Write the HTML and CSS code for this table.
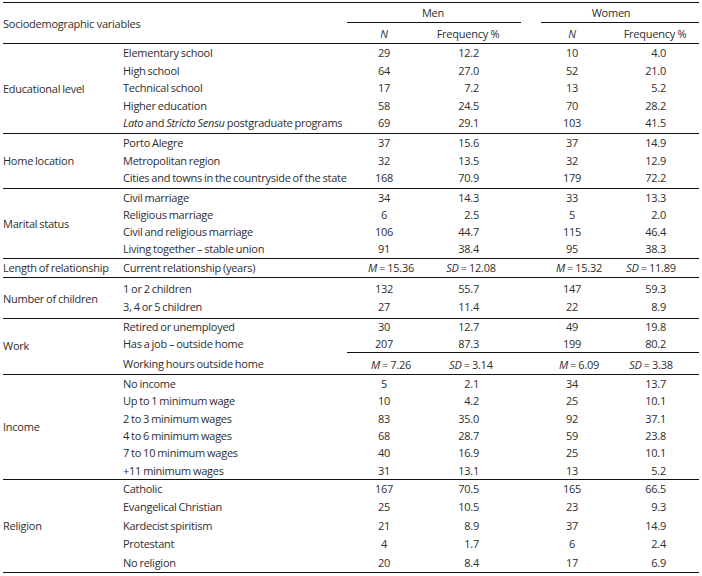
FILE: index.html
```html
<!DOCTYPE html>
<html lang="en">
<head>
<meta charset="utf-8">
<title>Sociodemographic variables</title>
<link rel="stylesheet" href="styles.css">
</head>
<body>
<table class="t">
  <colgroup>
    <col class="c-lab"><col class="c-sub"><col class="c-n"><col class="c-f"><col class="c-gap"><col class="c-n2"><col class="c-f2">
  </colgroup>
  <thead>
    <tr class="h1">
      <th class="lab" rowspan="2">Sociodemographic variables</th>
      <th></th>
      <th class="grp men" colspan="2">Men</th>
      <th></th>
      <th class="grp women" colspan="2">Women</th>
    </tr>
    <tr class="h2">
      <th></th>
      <th class="n"><i>N</i></th>
      <th class="fh">Frequency %</th>
      <th></th>
      <th class="n"><i>N</i></th>
      <th class="fh2">Frequency %</th>
    </tr>
  </thead>
  <tbody class="g edu">
    <tr class="first"><td class="lab" rowspan="5">Educational level</td><td class="sub">Elementary school</td><td class="n">29</td><td class="f">12.2</td><td></td><td class="n">10</td><td class="f2">4.0</td></tr>
    <tr><td class="sub">High school</td><td class="n">64</td><td class="f">27.0</td><td></td><td class="n">52</td><td class="f2">21.0</td></tr>
    <tr><td class="sub">Technical school</td><td class="n">17</td><td class="f">7.2</td><td></td><td class="n">13</td><td class="f2">5.2</td></tr>
    <tr><td class="sub">Higher education</td><td class="n">58</td><td class="f">24.5</td><td></td><td class="n">70</td><td class="f2">28.2</td></tr>
    <tr class="last"><td class="sub"><i>Lato</i> and <i>Stricto Sensu</i> postgraduate programs</td><td class="n">69</td><td class="f">29.1</td><td></td><td class="n">103</td><td class="f2">41.5</td></tr>
  </tbody>
  <tbody class="g home">
    <tr class="first"><td class="lab" rowspan="3">Home location</td><td class="sub">Porto Alegre</td><td class="n">37</td><td class="f">15.6</td><td></td><td class="n">37</td><td class="f2">14.9</td></tr>
    <tr><td class="sub">Metropolitan region</td><td class="n">32</td><td class="f">13.5</td><td></td><td class="n">32</td><td class="f2">12.9</td></tr>
    <tr class="last"><td class="sub">Cities and towns in the countryside of the state</td><td class="n">168</td><td class="f">70.9</td><td></td><td class="n">179</td><td class="f2">72.2</td></tr>
  </tbody>
  <tbody class="g marital">
    <tr class="first"><td class="lab" rowspan="4">Marital status</td><td class="sub">Civil marriage</td><td class="n">34</td><td class="f">14.3</td><td></td><td class="n">33</td><td class="f2">13.3</td></tr>
    <tr><td class="sub">Religious marriage</td><td class="n">6</td><td class="f">2.5</td><td></td><td class="n">5</td><td class="f2">2.0</td></tr>
    <tr><td class="sub">Civil and religious marriage</td><td class="n">106</td><td class="f">44.7</td><td></td><td class="n">115</td><td class="f2">46.4</td></tr>
    <tr class="last"><td class="sub">Living together – stable union</td><td class="n">91</td><td class="f">38.4</td><td></td><td class="n">95</td><td class="f2">38.3</td></tr>
  </tbody>
  <tbody class="g length">
    <tr class="first last"><td class="lab">Length of relationship</td><td class="sub">Current relationship (years)</td><td class="m"><i>M</i> = 15.36</td><td class="sd"><i>SD</i> = 12.08</td><td></td><td class="m"><i>M</i> = 15.32</td><td class="sd"><i>SD</i> = 11.89</td></tr>
  </tbody>
  <tbody class="g children">
    <tr class="first"><td class="lab" rowspan="2">Number of children</td><td class="sub">1 or 2 children</td><td class="n">132</td><td class="f">55.7</td><td></td><td class="n">147</td><td class="f2">59.3</td></tr>
    <tr class="last"><td class="sub">3, 4 or 5 children</td><td class="n">27</td><td class="f">11.4</td><td></td><td class="n">22</td><td class="f2">8.9</td></tr>
  </tbody>
  <tbody class="g work">
    <tr class="first"><td class="lab" rowspan="3">Work</td><td class="sub">Retired or unemployed</td><td class="n">30</td><td class="f">12.7</td><td></td><td class="n">49</td><td class="f2">19.8</td></tr>
    <tr><td class="sub">Has a job – outside home</td><td class="n">207</td><td class="f">87.3</td><td></td><td class="n">199</td><td class="f2">80.2</td></tr>
    <tr class="last sep"><td class="sub">Working hours outside home</td><td class="m"><i>M</i> = 7.26</td><td class="sd"><i>SD</i> = 3.14</td><td></td><td class="m"><i>M</i> = 6.09</td><td class="sd"><i>SD</i> = 3.38</td></tr>
  </tbody>
  <tbody class="g income">
    <tr class="first"><td class="lab" rowspan="6">Income</td><td class="sub">No income</td><td class="n">5</td><td class="f">2.1</td><td></td><td class="n">34</td><td class="f2">13.7</td></tr>
    <tr><td class="sub">Up to 1 minimum wage</td><td class="n">10</td><td class="f">4.2</td><td></td><td class="n">25</td><td class="f2">10.1</td></tr>
    <tr><td class="sub">2 to 3 minimum wages</td><td class="n">83</td><td class="f">35.0</td><td></td><td class="n">92</td><td class="f2">37.1</td></tr>
    <tr><td class="sub">4 to 6 minimum wages</td><td class="n">68</td><td class="f">28.7</td><td></td><td class="n">59</td><td class="f2">23.8</td></tr>
    <tr><td class="sub">7 to 10 minimum wages</td><td class="n">40</td><td class="f">16.9</td><td></td><td class="n">25</td><td class="f2">10.1</td></tr>
    <tr class="last"><td class="sub">+11 minimum wages</td><td class="n">31</td><td class="f">13.1</td><td></td><td class="n">13</td><td class="f2">5.2</td></tr>
  </tbody>
  <tbody class="g religion">
    <tr class="first"><td class="lab" rowspan="5">Religion</td><td class="sub">Catholic</td><td class="n">167</td><td class="f">70.5</td><td></td><td class="n">165</td><td class="f2">66.5</td></tr>
    <tr><td class="sub">Evangelical Christian</td><td class="n">25</td><td class="f">10.5</td><td></td><td class="n">23</td><td class="f2">9.3</td></tr>
    <tr><td class="sub">Kardecist spiritism</td><td class="n">21</td><td class="f">8.9</td><td></td><td class="n">37</td><td class="f2">14.9</td></tr>
    <tr><td class="sub">Protestant</td><td class="n">4</td><td class="f">1.7</td><td></td><td class="n">6</td><td class="f2">2.4</td></tr>
    <tr class="last"><td class="sub">No religion</td><td class="n">20</td><td class="f">8.4</td><td></td><td class="n">17</td><td class="f2">6.9</td></tr>
  </tbody>
</table>
</body>
</html>
```

FILE: styles.css
```css
html, body {
  margin: 0;
  padding: 0;
  background: #ffffff;
}

body {
  padding: 2px 0 0 3px;
  font-family: "Open Sans", "Noto Sans", sans-serif;
  font-size: 11px;
  letter-spacing: -0.25px;
  color: #2e2e2e;
}

.t {
  border-collapse: collapse;
  table-layout: fixed;
  width: 696px;
  border-top: 1px solid #111111;
}

.c-lab { width: 117px; }
.c-sub { width: 227px; }
.c-n { width: 74px; }
.c-f { width: 100px; }
.c-gap { width: 20px; }
.c-n2 { width: 62px; }
.c-f2 { width: 96px; }

th, td {
  padding: 0;
  font-weight: normal;
  white-space: nowrap;
  vertical-align: middle;
}

thead th {
  line-height: 15px;
}

thead .h1 th {
  height: 19px;
  text-align: center;
}

thead .h2 th {
  height: 20px;
  text-align: center;
}

thead tr.h2 {
  border-bottom: 1px solid #111111;
}

th.lab {
  text-align: left;
}

th.grp {
  border-bottom: 1px solid #111111;
}

th.men {
  padding-right: 2px;
}

th.women {
  padding-right: 18px;
}

th.fh {
  padding-right: 6px;
}

th.fh2 {
  padding-left: 8px;
}

/* body groups: per-group row rhythm */
tbody.g {
  --lh: 17.5px;
  --pt: 0px;
  --pb: 0px;
  border-bottom: 1px solid #111111;
}

tbody.edu, tbody.home { --pt: 0.25px; --pb: 1.25px; }
tbody.marital { --lh: 17px; --pb: 1px; }
tbody.length { --lh: 18px; }
tbody.children { --pt: 2.25px; --pb: 2.75px; }
tbody.work { --lh: 16.5px; }
tbody.income { --lh: 17.33px; }
tbody.religion { --lh: 18.4px; }

tbody.g td {
  line-height: var(--lh);
}

tr.first td {
  padding-top: var(--pt);
}

tr.last td {
  padding-bottom: var(--pb);
}

td.lab,
td.sub {
  text-align: left;
  word-spacing: -0.6px;
}

td.sub {
  padding-left: 3px;
}

td.n {
  text-align: center;
}

td.f {
  text-align: right;
  padding-right: 42px;
}

td.f2 {
  text-align: right;
  padding-right: 33px;
}

td.m {
  text-align: center;
  padding-left: 14px;
  word-spacing: -0.5px;
}

td.sd {
  text-align: center;
  word-spacing: -0.5px;
}

tr.sep td.m,
tr.sep td.sd,
tr.sep td:nth-child(4) {
  border-top: 1px solid #111111;
}

tbody.work tr.sep td {
  line-height: 17.5px;
  padding-top: 2.5px;
  padding-bottom: 1px;
}
```
